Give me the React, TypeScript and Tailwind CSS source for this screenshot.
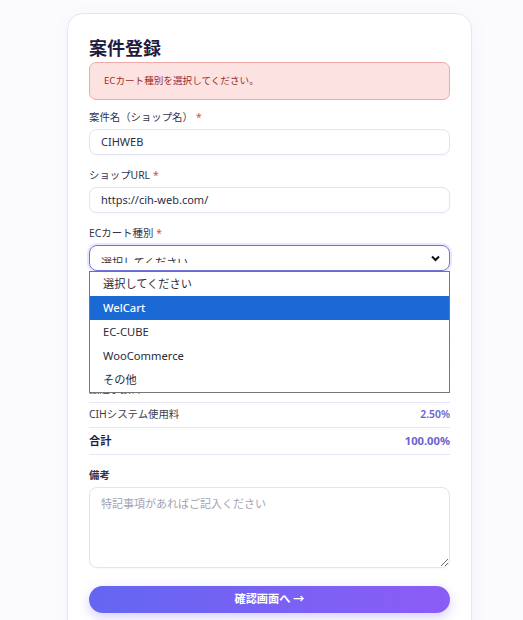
const fieldFont = { fontFamily: '"Noto Sans", "Noto Sans CJK JP", sans-serif' };

const options = ['選択してください', 'WelCart', 'EC-CUBE', 'WooCommerce', 'その他'];

const rates = [
  { label: '決済手数料', value: '3.60%' },
  { label: '代理店手数料', value: '1.00%' },
  { label: '販売店取分', value: '92.90%' },
  { label: '振込手数料', value: '0.00%' },
  { label: 'CIHシステム使用料', value: '2.50%' },
];

const Label = ({ children }: { children: React.ReactNode }) => (
  <label className="block text-[10.4px] leading-[16px] text-[#33334a] mb-[4px]">
    {children}
    <span className="text-[#e04848] ml-[3px]">*</span>
  </label>
);

export default function App() {
  return (
    <div
      className="h-[620px] overflow-hidden bg-[#fbfbfe] pt-[13px] pl-[67px]"
      style={fieldFont}
    >
      <div className="w-[405px] bg-white border border-[#e6e6f8] rounded-[16px] shadow-[0_4px_18px_rgba(99,102,241,0.06)] px-[21px] pt-[20px] pb-10">
        <h2 className="text-[18px] leading-[28px] font-bold text-[#1e1b3f]">案件登録</h2>

        {/* Error */}
        <div className="h-[38px] flex items-center px-[14px] bg-[#fde2e2] border border-[#f0a9a9] rounded-[7px] text-[9.6px] text-[#9b2c2c]">
          ECカート種別を選択してください。
        </div>

        {/* Fields */}
        <div className="mt-[9px]">
          <Label>案件名（ショップ名）</Label>
          <div className="h-[26px] flex items-center px-[11px] border border-[#e3e3f5] rounded-[8px] text-[11px] text-[#2d2d44] shadow-[0_1px_2px_rgba(99,102,241,0.05)]">
            CIHWEB
          </div>
        </div>

        <div className="mt-[12px]">
          <Label>ショップURL</Label>
          <div className="h-[26px] flex items-center px-[11px] border border-[#e3e3f5] rounded-[8px] text-[11px] text-[#2d2d44] shadow-[0_1px_2px_rgba(99,102,241,0.05)]">
            https://cih-web.com/
          </div>
        </div>

        <div className="mt-[12px] relative">
          <Label>ECカート種別</Label>
          <div className="h-[26px] flex justify-between px-[11px] border border-[#6f71d8] rounded-[8px] ring-2 ring-[#6366f1]/15">
            <div className="mt-[9px] h-[8px] overflow-hidden text-[11px] leading-[16px] text-[#2d2d44]">
              選択してください
            </div>
            <svg width="9" height="7" viewBox="0 0 9 7" className="mt-[9px] -mr-[2px]">
              <path d="M1 1.5 L4.5 5 L8 1.5" fill="none" stroke="#111" strokeWidth="2" />
            </svg>
          </div>

          {/* Open dropdown */}
          <div className="absolute left-0 right-0 top-[46px] z-10 bg-white border border-[#767676]">
            {options.map((o) => (
              <div
                key={o}
                className={
                  o === 'WelCart'
                    ? 'h-[24px] flex items-center pl-[13px] pt-[1px] text-[11.2px] bg-[#1a69d4] text-white font-medium'
                    : 'h-[24px] flex items-center pl-[13px] pt-[1px] text-[11.2px] text-[#2a2a3a]'
                }
              >
                {o}
              </div>
            ))}
          </div>
        </div>

        {/* Rates */}
        <div className="mt-[12px]">
          <div className="text-[10.4px] leading-[16px] text-[#33334a] mb-[4px]">料率内訳</div>
          {rates.map((r) => (
            <div
              key={r.label}
              className="h-[25px] flex items-center justify-between border-b border-[#e6e6f6] text-[10.4px]"
            >
              <span className="text-[#3a3a50]">{r.label}</span>
              <span className="text-[#6b5fd3] font-semibold">{r.value}</span>
            </div>
          ))}
          <div className="h-[27px] flex items-center justify-between border-b border-[#e6e6f6]">
            <span className="text-[11.2px] font-bold text-[#1e1b3f]">合計</span>
            <span className="text-[11.2px] font-bold text-[#6b5fd3]">100.00%</span>
          </div>
        </div>

        {/* Notes */}
        <div className="mt-[12px]">
          <label className="block text-[10.4px] leading-[16px] text-[#33334a] mb-[4px] font-semibold">備考</label>
          <textarea
            placeholder="特記事項があればご記入ください"
            className="block w-full h-[81px] px-[11px] py-[8px] border border-[#e3e3f5] rounded-[8px] text-[11px] leading-[16px] text-[#2d2d44] placeholder:text-[#a3a3b3] outline-none shadow-[0_1px_2px_rgba(99,102,241,0.05)]"
            style={fieldFont}
          />
        </div>

        <button className="mt-[18px] w-full h-[27px] rounded-full bg-gradient-to-r from-[#6366f1] to-[#8b5cf6] text-white text-[11.2px] font-bold shadow-[0_4px_12px_rgba(124,92,246,0.3)]">
          確認画面へ →
        </button>
      </div>
    </div>
  );
}
